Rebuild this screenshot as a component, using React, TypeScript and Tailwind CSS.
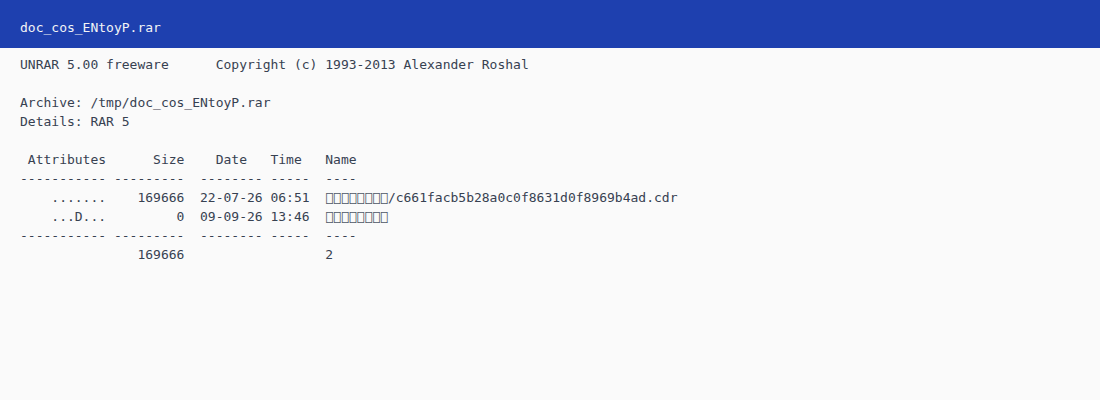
import React from "react";

const TOFU = "\uE000\uE000\uE000\uE000\uE000\uE000\uE000\uE000";

const Tofu = () => (
  <span className="inline-block opacity-[0.99] text-[#4b5563]">{TOFU}</span>
);

export default function App() {
  return (
    <div
      className="w-[1100px] h-[400px] bg-[#fafafa] flex flex-col"
      style={{ fontFamily: '"DejaVu Sans Mono", monospace' }}
    >
      <header className="h-12 shrink-0 bg-[#1e40af] px-5 pt-2 flex items-center text-[13px] text-[#f3f4f6]">
        doc_cos_ENtoyP.rar
      </header>
      <pre className="px-5 pt-[7px] text-[13px] leading-[19px] text-[#374151] font-[inherit]">
        {"UNRAR 5.00 freeware      Copyright (c) 1993-2013 Alexander Roshal\n"}
        {"\n"}
        {"Archive: /tmp/doc_cos_ENtoyP.rar\n"}
        {"Details: RAR 5\n"}
        {"\n"}
        {" Attributes      Size    Date   Time   Name\n"}
        {"----------- ---------  -------- -----  ----\n"}
        {"    .......    169666  22-07-26 06:51  "}
        <Tofu />
        {"/c661facb5b28a0c0f8631d0f8969b4ad.cdr\n"}
        {"    ...D...         0  09-09-26 13:46  "}
        <Tofu />
        {"\n"}
        {"----------- ---------  -------- -----  ----\n"}
        {"               169666                  2"}
      </pre>
    </div>
  );
}
